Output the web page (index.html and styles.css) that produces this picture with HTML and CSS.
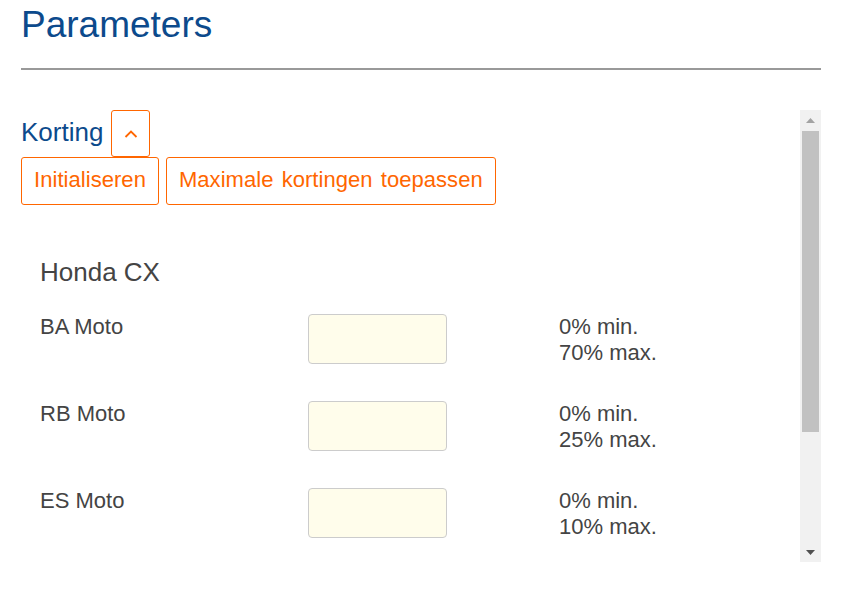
FILE: index.html
```html
<!DOCTYPE html>
<html lang="nl">
<head>
  <meta charset="UTF-8">
  <meta name="viewport" content="width=device-width, initial-scale=1.0">
  <title>Parameters</title>
  <link rel="stylesheet" href="styles.css">
</head>
<body>
  <div class="page">
    <h1 class="page-title">Parameters</h1>
    <hr class="divider">

    <div class="panel">
      <div class="panel-content">
        <div class="section-head">
          <span class="section-title">Korting</span>
          <button class="toggle" type="button">
            <svg width="14" height="8" viewBox="0 0 14 8">
              <polyline points="1.5,7 7,1.5 12.5,7" fill="none" stroke="#f60" stroke-width="1.8"/>
            </svg>
          </button>
        </div>
        <div class="actions">
          <button class="btn" type="button">Initialiseren</button>
          <button class="btn" type="button">Maximale kortingen toepassen</button>
        </div>

        <div class="group">
          <h3 class="group-title">Honda CX</h3>
          <div class="rows">
            <div class="row-label">BA Moto</div>
            <input class="field" type="text">
            <div class="range">0% min.<br>70% max.</div>

            <div class="row-label">RB Moto</div>
            <input class="field" type="text">
            <div class="range">0% min.<br>25% max.</div>

            <div class="row-label">ES Moto</div>
            <input class="field" type="text">
            <div class="range">0% min.<br>10% max.</div>
          </div>
        </div>
      </div>

      <!-- scrollbar -->
      <div class="scrollbar">
        <div class="scroll-btn">
          <svg width="9" height="5" viewBox="0 0 9 5"><polygon points="0,5 4.5,0 9,5" fill="#a3a3a3"/></svg>
        </div>
        <div class="scroll-track">
          <div class="scroll-thumb"></div>
        </div>
        <div class="scroll-btn">
          <svg width="9" height="5" viewBox="0 0 9 5"><polygon points="0,0 9,0 4.5,5" fill="#505050"/></svg>
        </div>
      </div>
    </div>
  </div>
</body>
</html>
```

FILE: styles.css
```css
/* Page layout */
body {
  margin: 0;
  font-family: "Liberation Sans", Arial, sans-serif;
  background-color: #fff;
  color: #444;
}

.page {
  width: 800px;
  padding-left: 21px;
}

.page-title {
  margin: 0;
  padding-top: 5px;
  font-size: 37px;
  line-height: 40px;
  font-weight: normal;
  color: #0c4a8c;
}

.divider {
  margin: 23px 0 40px;
  height: 2px;
  border: none;
  background-color: #999;
}

/* Scrolling panel */
.panel {
  display: flex;
  height: 452px;
}

.panel-content {
  flex: 1;
  overflow: hidden;
}

.section-head {
  display: flex;
  align-items: flex-start;
  gap: 8px;
}

.section-title {
  padding-top: 7px;
  font-size: 26px;
  line-height: 30px;
  color: #0c4a8c;
}

.toggle {
  width: 39px;
  height: 47px;
  padding: 0;
  background-color: #fff;
  border: 1px solid #f60;
  border-radius: 3px;
  display: flex;
  align-items: center;
  justify-content: center;
  cursor: pointer;
}

.actions {
  display: flex;
  gap: 7px;
}

.btn {
  padding: 9px 12px 11px;
  font-family: inherit;
  font-size: 22px;
  line-height: 26px;
  letter-spacing: 0.05px;
  word-spacing: 2px;
  color: #f60;
  background-color: #fff;
  border: 1px solid #f60;
  border-radius: 3px;
  cursor: pointer;
}

.group {
  padding-left: 19px;
}

.group-title {
  margin: 52px 0 0;
  font-size: 26px;
  line-height: 30px;
  font-weight: normal;
  color: #444;
}

.rows {
  margin-top: 27px;
  display: grid;
  grid-template-columns: 268px 251px 1fr;
  grid-auto-rows: 50px;
  row-gap: 37px;
  align-items: start;
  font-size: 22px;
  line-height: 26px;
}

.field {
  box-sizing: border-box;
  width: 139px;
  height: 50px;
  background-color: #fffdeb;
  border: 1px solid #ccc;
  border-radius: 4px;
}

/* Fake scrollbar */
.scrollbar {
  width: 21px;
  display: flex;
  flex-direction: column;
  background-color: #f1f1f1;
}

.scroll-btn {
  height: 20px;
  display: flex;
  align-items: center;
  justify-content: center;
}

.scroll-track {
  flex: 1;
  padding: 1px 2px 0;
}

.scroll-thumb {
  height: 301px;
  background-color: #c1c1c1;
}
```
